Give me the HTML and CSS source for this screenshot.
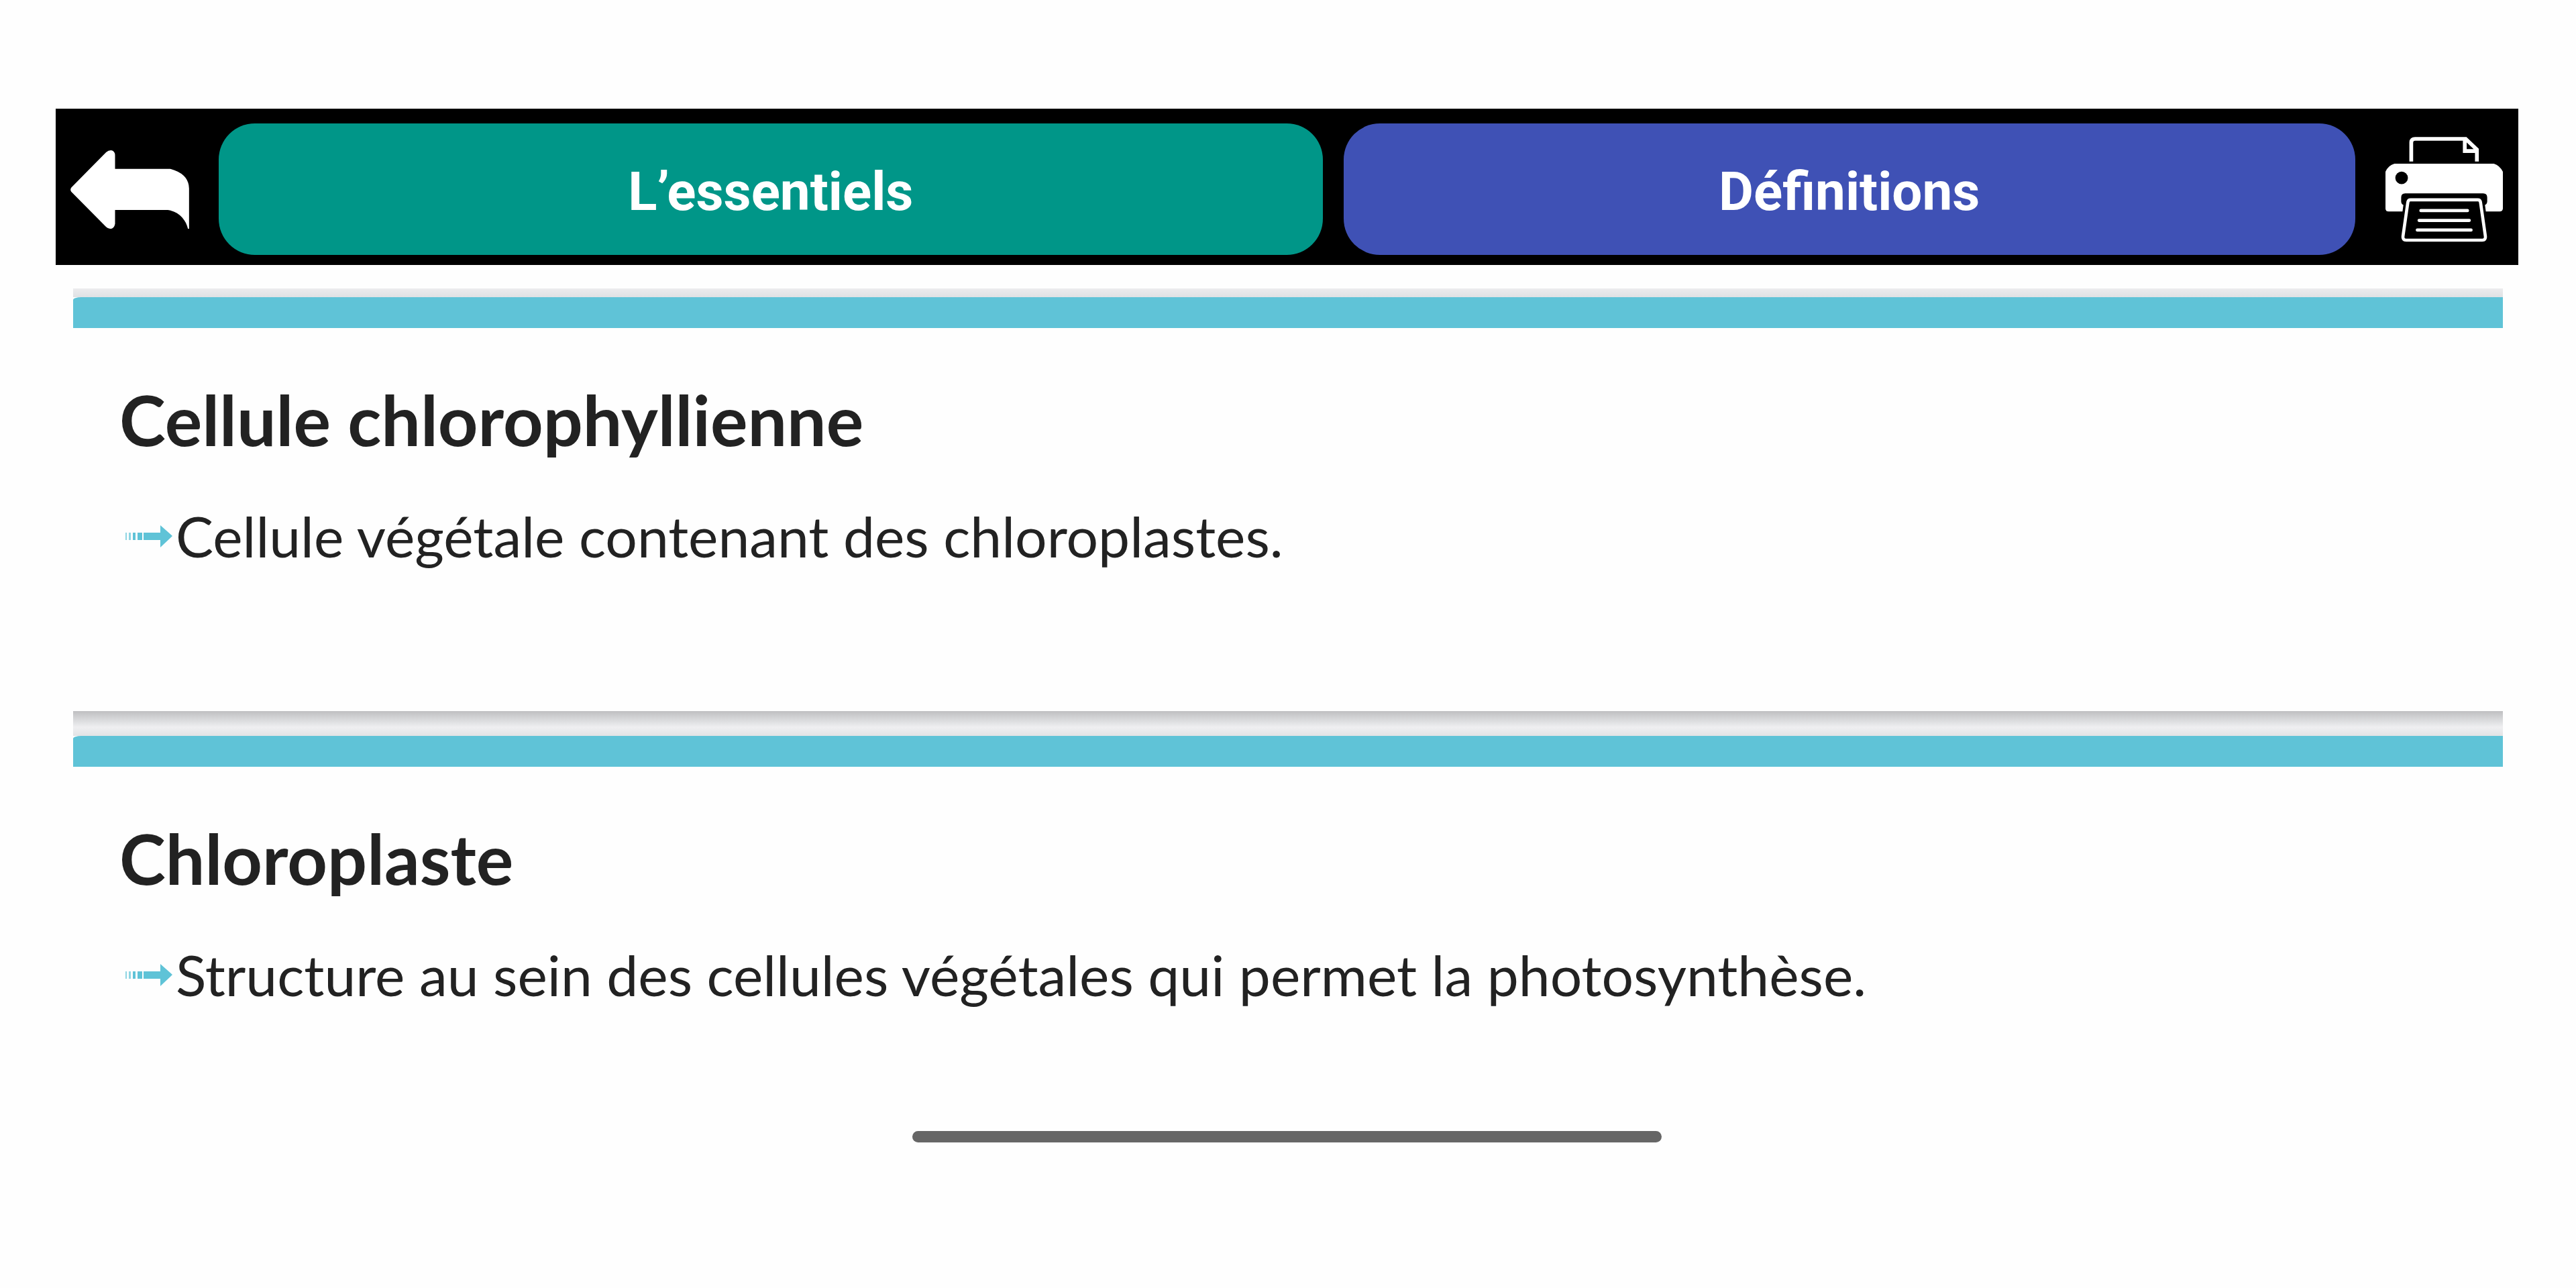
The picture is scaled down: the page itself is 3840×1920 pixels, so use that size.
FILE: index.html
```html
<!DOCTYPE html>
<html lang="fr">
<head>
  <meta charset="UTF-8">
  <meta name="viewport" content="width=device-width, initial-scale=1">
  <title>Définitions</title>
  <link rel="stylesheet" href="styles.css">
</head>
<body>
  <nav class="topbar">
    <button type="button" class="icon-btn back" aria-label="Retour">
      <svg viewBox="105 219 530 351" width="177" height="117" aria-hidden="true">
        <path fill="#fff" d="M108 386 L264 228 Q274 219 286 219 Q304 222 304 242 V302 H550 Q634 324 635 390 V570 H630 C622 532 590 492 540 486 H304 V548 Q300 570 282 570 Q272 570 264 562 L108 404 Q102 395 108 386 Z"/>
      </svg>
    </button>
    <button type="button" class="tab essentiels">L’essentiels</button>
    <button type="button" class="tab definitions">Définitions</button>
    <button type="button" class="icon-btn print" aria-label="Imprimer">
      <svg viewBox="228 160 524 470" width="175" height="157" aria-hidden="true">
        <path fill="none" stroke="#fff" stroke-width="17" d="M343 270 V184 Q344 169 360 169 H586 L636 217 V270 M582 169 V223 H636"/>
        <path fill="#fff" d="M268 280 H712 Q738 288 752 316 V480 Q750 493 738 493 H676 L672 464 Q682 460 682 448 V430 Q682 412 664 412 H316 Q298 412 298 430 V448 Q298 460 308 464 L304 493 H242 Q228 493 228 480 V316 Q240 288 268 280 Z"/>
        <circle cx="300" cy="343" r="28" fill="#000"/>
        <path fill="none" stroke="#fff" stroke-width="14" stroke-linejoin="round" d="M340 441 H640 Q650 441 652 451 L674 604 Q676 621 660 621 H320 Q304 621 306 604 L328 451 Q330 441 340 441 Z"/>
        <path fill="none" stroke="#fff" stroke-width="14" stroke-linecap="round" d="M386 489 H594 M378 533 H602 M370 576 H610"/>
      </svg>
    </button>
  </nav>

  <main class="cards">
    <article class="card">
      <h2>Cellule chlorophyllienne</h2>
      <p>
        <svg class="arrow" viewBox="0 3 70 40" width="70" height="40" aria-hidden="true">
          <path fill="#5fc3d7" d="M27 18 H52 V7 L70 23 L52 40 V29 H27 Z M18 18 h7 v11 h-7 Z M11 18 h4 v11 h-4 Z"/>
          <path fill="#8fd5e3" d="M5 18 h3 v11 h-3 Z M0 18 h2 v11 h-2 Z"/>
        </svg>
        <span>Cellule végétale contenant des chloroplastes.</span>
      </p>
    </article>
    <article class="card">
      <h2>Chloroplaste</h2>
      <p>
        <svg class="arrow" viewBox="0 3 70 40" width="70" height="40" aria-hidden="true">
          <path fill="#5fc3d7" d="M27 18 H52 V7 L70 23 L52 40 V29 H27 Z M18 18 h7 v11 h-7 Z M11 18 h4 v11 h-4 Z"/>
          <path fill="#8fd5e3" d="M5 18 h3 v11 h-3 Z M0 18 h2 v11 h-2 Z"/>
        </svg>
        <span>Structure au sein des cellules végétales qui permet la photosynthèse.</span>
      </p>
    </article>
  </main>

  <div class="home-bar"></div>
</body>
</html>
```
FILE: styles.css
```css
* {
  box-sizing: border-box;
}
body {
  margin: 0;
  padding: 162px 86px 0 83px;
  background: #fefefe;
  color: #222;
  font-family: Lato, "Open Sans", sans-serif;
}

/* Barre du haut */
.topbar {
  display: grid;
  grid-template-columns: 212px 12fr 11fr 212px;
  gap: 31px;
  padding: 22px 0 15px;
  background: #000;
}
button {
  border: 0;
  padding: 0;
  cursor: pointer;
}
.icon-btn {
  display: flex;
  align-items: center;
  background: none;
}
.back {
  padding-left: 22px;
}
.print {
  padding-left: 14px;
}
.tab {
  height: 196px;
  border-radius: 54px;
  color: #fff;
  font: bold 80px/100px Roboto, sans-serif;
  padding-top: 8px;
}
.essentiels {
  background: #009688;
}
.definitions {
  background: #3f51b5;
}

/* Fiches */
.cards {
  display: flex;
  flex-direction: column;
  gap: 37px;
  margin: 35px 23px 0 26px;
  padding-top: 13px;
  background: linear-gradient(#ececee, #dfe1e4 13px, #fefefe 13px);
}
.card {
  position: relative;
  padding: 76px 69px 211px;
  border-top: 46px solid #5fc3d7;
  border-top-left-radius: 12px 4px;
  background: #fefefe;
}
.card:last-child {
  padding-bottom: 0;
}
.card + .card::before {
  content: "";
  position: absolute;
  left: 0;
  right: 0;
  bottom: calc(100% + 46px);
  height: 37px;
  background: linear-gradient(#bfbfc1, #dcdddf 40%, #efeff1 65%, #e2e3e5);
}
.card h2 {
  margin: 0 0 64px;
  font-size: 104px;
  line-height: 120px;
  font-weight: bold;
}
.card p {
  display: flex;
  align-items: center;
  gap: 5px;
  margin: 0;
  padding-left: 9px;
  font-size: 84px;
  line-height: 100px;
}
.arrow {
  flex: none;
}

.home-bar {
  width: 1117px;
  max-width: 100%;
  height: 17px;
  margin: 183px auto 0;
  border-radius: 9px;
  background: #666;
}
```
